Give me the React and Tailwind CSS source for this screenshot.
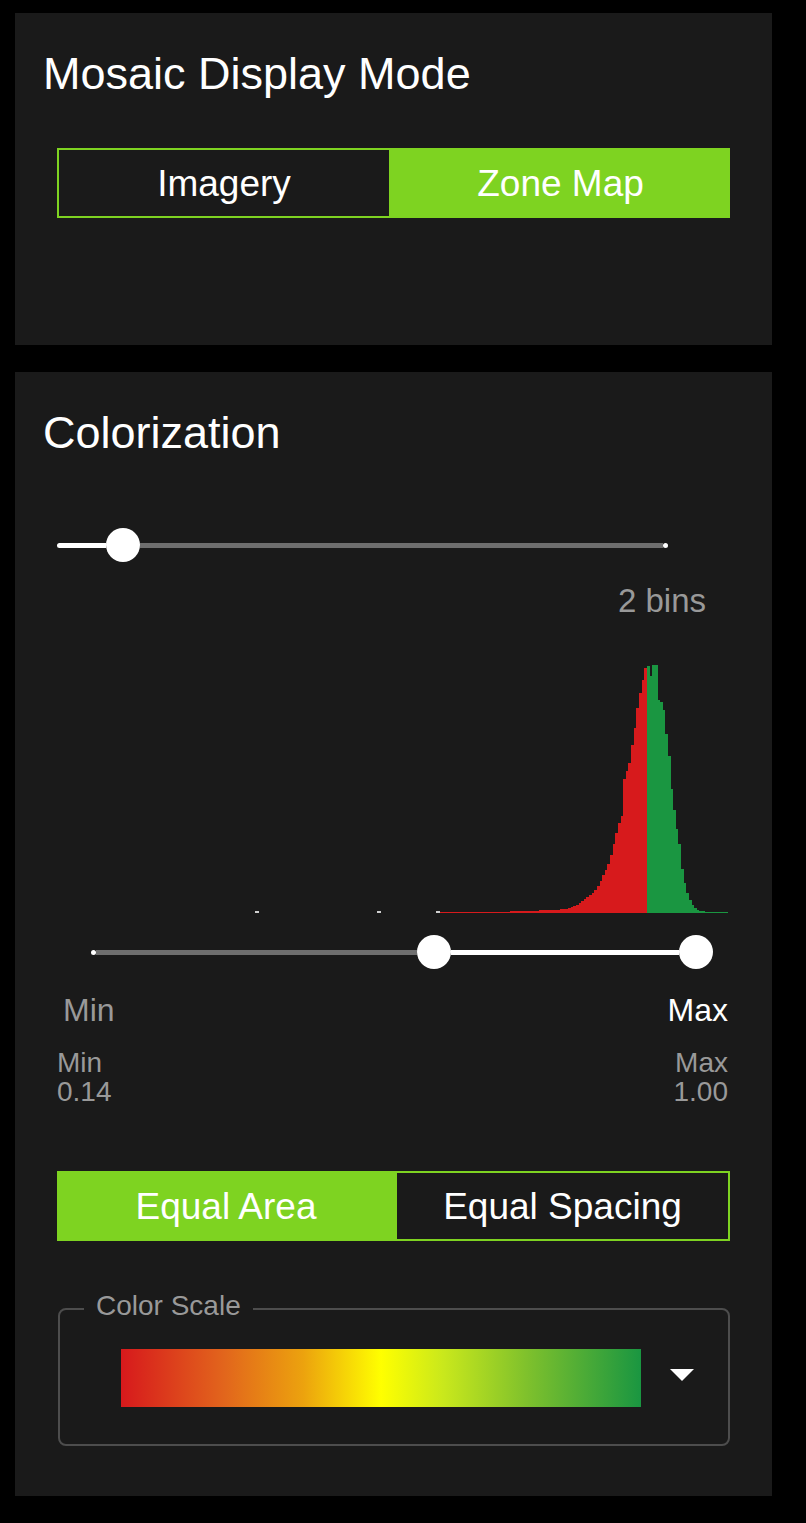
import React from 'react'

// sampled heights of the histogram bars, [page x, px above baseline]
const PTS = [
  [437, 1], [480, 1], [510, 1.5], [530, 2], [540, 2.5], [555, 3], [565, 4], [570, 5],
  [577, 8], [587, 15], [595, 22], [600, 30], [606, 43], [610, 52], [615, 73], [618, 87],
  [622, 97], [624, 133], [630, 151], [633, 173], [636, 191], [637, 202], [641, 225],
  [643, 234], [646, 247], [650, 247], [651, 232], [652, 248], [656, 248], [657, 214],
  [663, 210], [666, 183], [669, 157], [671, 129], [674, 105], [677, 83], [680, 66],
  [682, 45], [684, 33], [687, 21], [690, 13], [693, 7], [698, 3], [707, 1], [728, 1],
]

function heightAt(x){
  if (x < PTS[0][0]) return 0
  for (let i = 0; i < PTS.length - 1; i++){
    const [x0, h0] = PTS[i]
    const [x1, h1] = PTS[i + 1]
    if (x >= x0 && x <= x1) return h0 + (h1 - h0) * (x - x0) / (x1 - x0)
  }
  return 0
}

function Histogram(){
  const W = 671, H = 260, N = 256
  const bw = W / N
  const bars = []
  for (let i = 0; i < N; i++){
    const x = i * bw
    const h = Math.round(heightAt(57 + x + bw / 2))
    if (h <= 0) continue
    bars.push(
      <rect key={i} x={x} y={H - h} width={bw + 0.3} height={h}
        fill={57 + x < 646 ? '#d71a1c' : '#1a9641'} />
    )
  }
  return (
    <svg width={W} height={H} shapeRendering="crispEdges" className="block">
      {bars}
      <rect x={198} y={H - 2} width={4} height={2} fill="#cfcfcf" />
      <rect x={320} y={H - 2} width={4} height={2} fill="#cfcfcf" />
      <rect x={379} y={H - 2} width={4} height={2} fill="#cfcfcf" />
    </svg>
  )
}

function Toggle({ left, right, active, leftWidth }){
  const on = 'bg-[#7ed321] text-white'
  const off = 'border-2 border-[#7ed321] text-white'
  return (
    <div className="flex h-[70px] text-[37px] leading-none">
      <div className={`${leftWidth} flex items-center justify-center ${active === 0 ? on : off}`}>{left}</div>
      <div className={`flex-1 flex items-center justify-center ${active === 1 ? on : off}`}>{right}</div>
    </div>
  )
}

const Thumb = () => <div className="w-[34px] h-[34px] shrink-0 rounded-full bg-white" />
const Dot = () => <div className="w-[5px] h-[5px] shrink-0 rounded-full bg-white" />

export default function App(){
  return (
    <div className="min-h-[1523px] bg-black pt-[13px] pl-[15px] font-['Liberation_Sans',Arial,sans-serif] text-white">
      <div className="w-[757px] h-[332px] bg-[#1a1a1a] pt-[35px]">
        <h1 className="pl-[28px] text-[45px] leading-[52px]">Mosaic Display Mode</h1>
        <div className="mt-[48px] px-[42px]">
          <Toggle left="Imagery" right="Zone Map" active={1} leftWidth="w-[334px]" />
        </div>
      </div>

      <div className="mt-[27px] w-[757px] h-[1124px] bg-[#1a1a1a] pt-[35px]">
        <h2 className="pl-[28px] text-[45px] leading-[52px]">Colorization</h2>

        <div className="mt-[69px] ml-[42px] flex items-center h-[34px]">
          <div className="w-[49px] h-[5px] rounded-l-full bg-white" />
          <Thumb />
          <div className="w-[523px] h-[5px] bg-[#6e6e6e]" />
          <Dot />
        </div>

        <div className="mt-[20px] pr-[66px] text-right text-[33px] leading-[38px] text-[#999999]">2 bins</div>

        <div className="mt-[33px] ml-[42px]">
          <Histogram />
        </div>

        <div className="mt-[22px] ml-[76px] flex items-center h-[34px]">
          <Dot />
          <div className="w-[321px] h-[5px] bg-[#6e6e6e]" />
          <Thumb />
          <div className="w-[228px] h-[5px] bg-white" />
          <Thumb />
        </div>

        <div className="mt-[22px] ml-[48px] mr-[44px] flex justify-between text-[32px] leading-[38px]">
          <span className="text-[#999999]">Min</span>
          <span className="text-white font-medium">Max</span>
        </div>

        <div className="mt-[19px] ml-[42px] mr-[44px] flex justify-between text-[28px] leading-[29px] text-[#999999]">
          <div>
            <div>Min</div>
            <div>0.14</div>
          </div>
          <div className="text-right">
            <div>Max</div>
            <div>1.00</div>
          </div>
        </div>

        <div className="mt-[65px] px-[42px]">
          <Toggle left="Equal Area" right="Equal Spacing" active={0} leftWidth="w-[338px]" />
        </div>

        <fieldset className="mt-[49px] ml-[43px] w-[672px] border-2 border-[#4d4d4d] rounded-[8px] p-0 m-0">
          <legend className="ml-[24px] px-[12px] pb-[6px] text-[28px] leading-[32px] text-[#999999]">Color Scale</legend>
          <div className="h-[116px] pt-[21px] pl-[61px] flex items-start">
            <div className="w-[520px] h-[58px] bg-[linear-gradient(to_right,#d7191c,#e2661c_20%,#eca20e_35%,#ffff00_50%,#c9e81c_62%,#7fc12c_78%,#1a9641)]" />
            <svg width="24" height="12" viewBox="0 0 24 12" className="ml-[29px] mt-[20px]">
              <polygon points="0,0 24,0 12,12" fill="#ffffff" />
            </svg>
          </div>
        </fieldset>
      </div>
    </div>
  )
}
